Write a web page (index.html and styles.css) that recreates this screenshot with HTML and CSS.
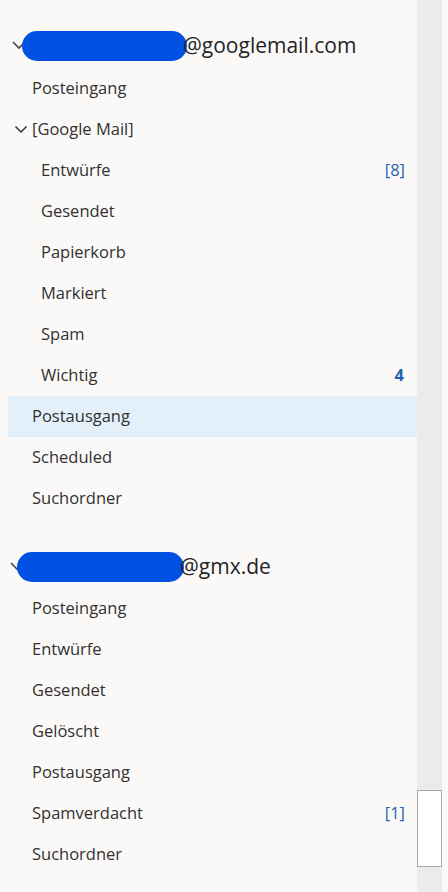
FILE: index.html
```html
<!DOCTYPE html>
<html lang="de">
<head>
    <meta charset="UTF-8">
    <meta name="viewport" content="width=device-width, initial-scale=1.0">
    <title>Ordner</title>
    <link rel="stylesheet" href="styles.css">
</head>
<body>
    <div class="pane">
        <nav class="folders">
            <!-- Konto 1 -->
            <div class="account">
                <div class="account-head">
                    <svg class="chev-head" width="14" height="10" viewBox="0 0 14 10"><path d="M1 1 L7 7 L13 1" fill="none" stroke="#444" stroke-width="1.6"/></svg>
                    <span class="mask mask-google"></span>
                    <span class="domain">@googlemail.com</span>
                </div>
                <div class="folder">Posteingang</div>
                <div class="folder group">
                    <svg class="chev" width="14" height="9" viewBox="0 0 14 9"><path d="M1.5 1.5 L7 7 L12.5 1.5" fill="none" stroke="#323130" stroke-width="1.5"/></svg>
                    [Google Mail]
                </div>
                <div class="folder sub"><span>Entwürfe</span><span class="count">[8]</span></div>
                <div class="folder sub">Gesendet</div>
                <div class="folder sub">Papierkorb</div>
                <div class="folder sub">Markiert</div>
                <div class="folder sub">Spam</div>
                <div class="folder sub"><span>Wichtig</span><span class="count unread">4</span></div>
                <div class="folder selected">Postausgang</div>
                <div class="folder">Scheduled</div>
                <div class="folder">Suchordner</div>
            </div>

            <!-- Konto 2 -->
            <div class="account second">
                <div class="account-head">
                    <svg class="chev-head" width="14" height="10" viewBox="0 0 14 10"><path d="M1 1 L7 7 L13 1" fill="none" stroke="#444" stroke-width="1.6"/></svg>
                    <span class="mask mask-gmx"></span>
                    <span class="domain">@gmx.de</span>
                </div>
                <div class="folder">Posteingang</div>
                <div class="folder">Entwürfe</div>
                <div class="folder">Gesendet</div>
                <div class="folder">Gelöscht</div>
                <div class="folder">Postausgang</div>
                <div class="folder"><span>Spamverdacht</span><span class="count">[1]</span></div>
                <div class="folder">Suchordner</div>
            </div>
        </nav>
        <div class="scrollbar">
            <div class="thumb"></div>
        </div>
    </div>
</body>
</html>
```

FILE: styles.css
```css
body {
    margin: 0;
    background: #faf9f8;
    font-family: 'Open Sans', 'Noto Sans', sans-serif;
    color: #323130;
}

.pane {
    display: flex;
    height: 892px;
    overflow: hidden;
}

.folders {
    width: 417px;
    padding-top: 24px;
}

.account.second {
    margin-top: 27px;
}

.account-head {
    position: relative;
    height: 44px;
    display: flex;
    align-items: center;
    font-size: 21px;
    color: #242424;
}

.account.second .account-head {
    height: 42px;
}

.chev-head {
    position: absolute;
    left: 12px;
    top: 17px;
}

.account.second .chev-head {
    left: 10px;
    top: 16px;
}

/* geschwärzte Adresse */
.mask {
    position: relative;
    height: 30px;
    border-radius: 15px;
    background: #0050e3;
}

.mask-google {
    margin-left: 22px;
    width: 165px;
}

.mask-gmx {
    margin-left: 17px;
    width: 167px;
}

.domain {
    margin-left: -4px;
    position: relative;
    top: -1px;
}

.folder {
    height: 41px;
    display: flex;
    align-items: center;
    justify-content: space-between;
    padding-left: 32px;
    padding-right: 12px;
    font-size: 16.5px;
    line-height: 1;
}

.folder.sub {
    padding-left: 41px;
}

.folder.group {
    justify-content: flex-start;
    position: relative;
}

.chev {
    position: absolute;
    left: 14px;
    top: 16px;
}

.folder.selected {
    margin-left: 8px;
    padding-left: 24px;
    background: #e3f0fa;
}

.count {
    color: #1f63b0;
}

.count.unread {
    font-weight: 700;
    padding-right: 1px;
}

.scrollbar {
    width: 25px;
    background: #edebe9;
    position: relative;
}

.thumb {
    position: absolute;
    left: 0;
    top: 790px;
    width: 23px;
    height: 75px;
    background: #fff;
    border: 1px solid #a8a8a8;
}
```
